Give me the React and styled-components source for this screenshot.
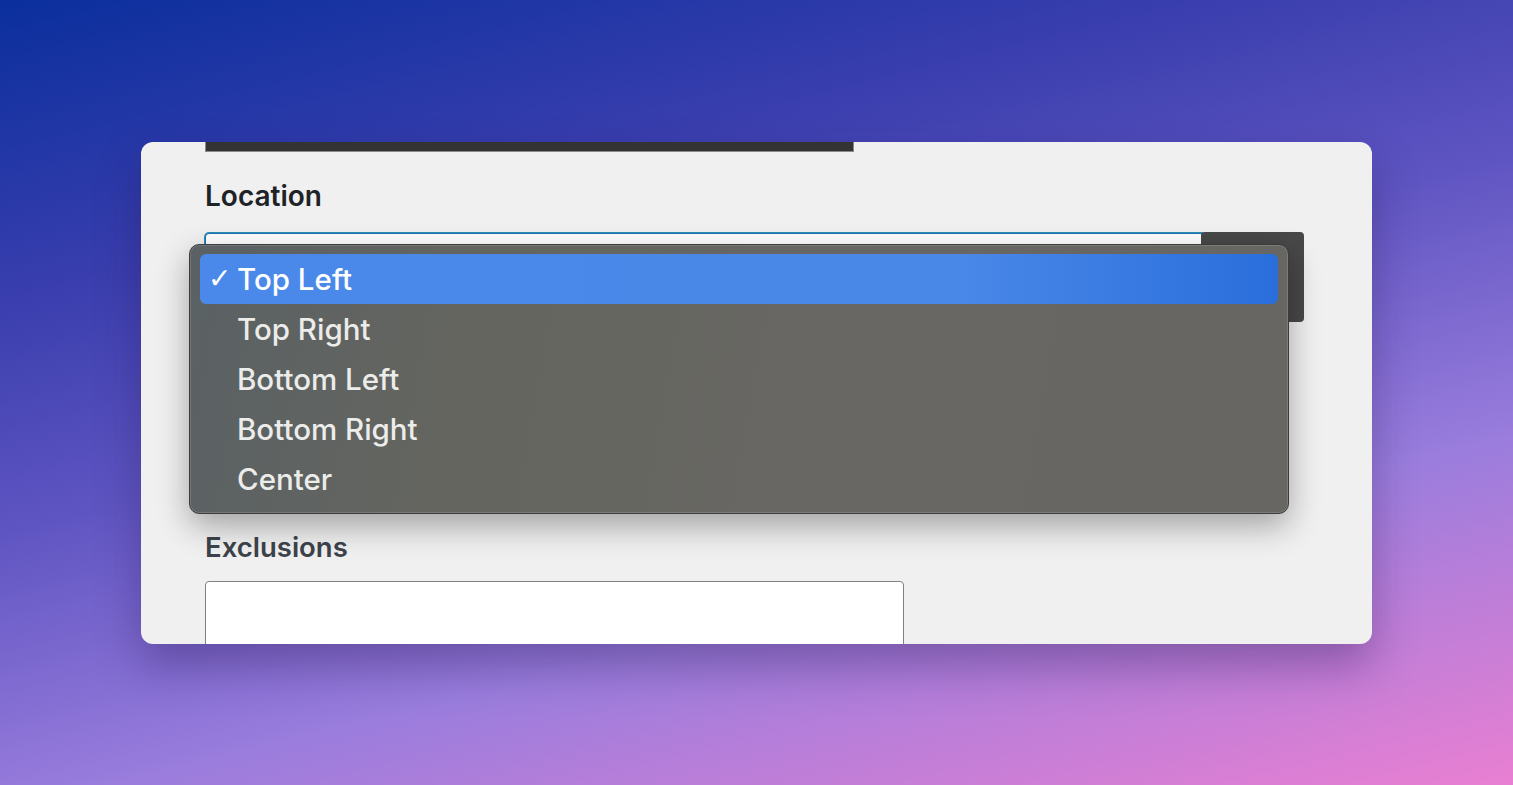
import React from 'react'
import styled, { createGlobalStyle } from 'styled-components'

const GlobalStyle = createGlobalStyle`
    html, body {
        margin: 0;
        padding: 0;
        height: 100%;
    }
    body {
        font-family: Inter, "Noto Sans", "Liberation Sans", sans-serif;
        background: linear-gradient(166deg, #0a2f9d 0%, #3a3eae 26%, #5f55c2 46%, #9a7ddd 70%, #e97fd2 100%);
        overflow: hidden;
    }
`

const Stage = styled.div`
    height: 100vh;
    display: flex;
    align-items: center;
    justify-content: center;
`

const Card = styled.div`
    width: 1231px;
    height: 502px;
    box-sizing: border-box;
    padding: 0 64px;
    background: #f0f0f1;
    border-radius: 12px;
    overflow: hidden;
    box-shadow: 0 22px 44px rgba(40, 20, 80, 0.35);
    display: flex;
    flex-direction: column;

    & > * {
        flex-shrink: 0;
    }
`

const CutField = styled.div`
    width: 649px;
    height: 10px;
    box-sizing: border-box;
    background: #333333;
    border: 1px solid #8a8a8a;
    border-top: none;
`

const Label = styled.div`
    font-size: ${p => p.$muted ? 27.5 : 28}px;
    line-height: 34px;
    font-weight: 600;
    color: ${p => p.$muted ? '#3c434a' : '#1d2327'};
    margin-top: ${p => p.$top}px;
`

const SelectRow = styled.div`
    position: relative;
    display: flex;
    align-items: flex-start;
    margin-top: 19px;
    height: 90px;
`

const SelectBox = styled.div`
    width: 997px;
    height: 88px;
    margin-top: 1px;
    box-sizing: border-box;
    background: #ffffff;
    border: 1px solid #2271b1;
    box-shadow: 0 0 0 1px #2a8fb4;
    border-radius: 4px 0 0 4px;
`

const SideButton = styled.div`
    width: 103px;
    height: 90px;
    margin-left: -1px;
    background: #484848;
    border-radius: 4px;
`

const Menu = styled.div`
    position: absolute;
    top: 12px;
    left: -16px;
    width: 1100px;
    height: 270px;
    box-sizing: border-box;
    padding: 9px 10px 9px;
    border: 1px solid #3c3c3c;
    border-radius: 10px;
    background: linear-gradient(100deg, #5a6164 0%, #64655f 25%, #686763 55%, #676662 100%);
    box-shadow: inset 0 0 0 1px rgba(255, 255, 255, 0.14), 0 12px 32px rgba(0, 0, 0, 0.32);
    display: flex;
    flex-direction: column;
`

const Item = styled.div`
    height: 50px;
    flex-shrink: 0;
    display: flex;
    align-items: center;
    padding-left: 8px;
    border-radius: 6px;
    font-size: 29.5px;
    font-weight: 450;
    color: ${p => p.$active ? '#ffffff' : '#ececea'};
    background: ${p => p.$active ? 'linear-gradient(90deg, #4a89e9 0%, #4a88e8 70%, #2a6edc 100%)' : 'transparent'};
`

const Check = styled.span`
    width: 29px;
    font-family: "DejaVu Sans", sans-serif;
    font-size: 28px;
    font-weight: 700;
`

const TextArea = styled.div`
    width: 699px;
    height: 120px;
    margin-top: 17px;
    box-sizing: border-box;
    background: #ffffff;
    border: 1px solid #7e8186;
    border-radius: 4px;
`

const options = ['Top Left', 'Top Right', 'Bottom Left', 'Bottom Right', 'Center']

export default function App() {
    const selected = 'Top Left'
    return (
        <>
            <GlobalStyle />
            <Stage>
                <Card>
                    <CutField />
                    <Label $top={27}>Location</Label>
                    <SelectRow>
                        <SelectBox />
                        <SideButton />
                        <Menu>
                            {options.map(o => (
                                <Item key={o} $active={o === selected}>
                                    <Check>{o === selected ? '✓' : ''}</Check>
                                    {o}
                                </Item>
                            ))}
                        </Menu>
                    </SelectRow>
                    <Label $top={208} $muted>Exclusions</Label>
                    <TextArea />
                </Card>
            </Stage>
        </>
    )
}
